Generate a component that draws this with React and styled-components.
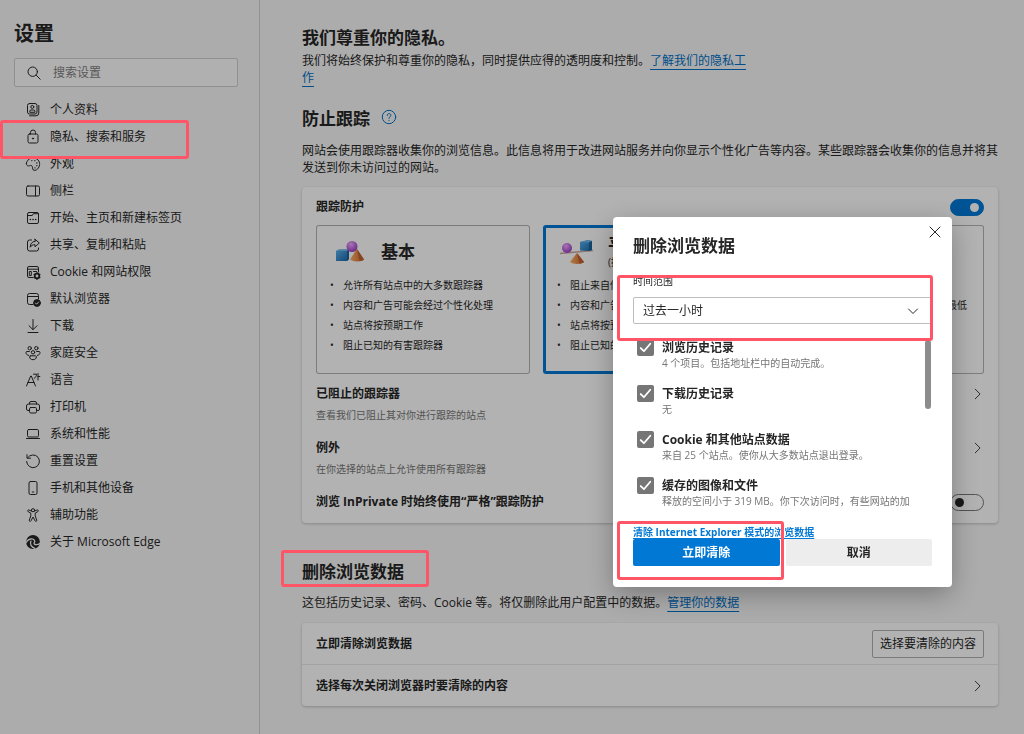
import React from "react";
import styled, { createGlobalStyle } from "styled-components";

const GlobalStyle = createGlobalStyle`
  *, *::before, *::after { box-sizing: border-box; }
  body {
    margin: 0;
    background: #f7f7f7;
    color: #262626;
    font-family: "Open Sans", "Noto Sans CJK SC", sans-serif;
    font-size: 12px;
    line-height: 17px;
  }
  h1, h2, h3, p, ul { margin: 0; padding: 0; }
  button, input, select { font: inherit; color: inherit; margin: 0; }
`;

/* ---------- shared parts ---------- */

const Page = styled.div`
  display: flex;
  min-height: 100vh;
`;

const Highlight = styled.div`
  position: absolute;
  z-index: 2;
  top: ${(p) => p.$top}px;
  left: ${(p) => p.$left}px;
  width: ${(p) => p.$width}px;
  height: ${(p) => p.$height}px;
  border: 3px solid #ff5566;
  border-radius: 3px;
  pointer-events: none;
`;

const Link = styled.a`
  color: #0070c6;
  text-decoration: underline;
  text-decoration-thickness: 1px;
  text-underline-offset: 4px;
`;

const Stroke = styled.svg.attrs({ viewBox: "0 0 16 16", "aria-hidden": true })`
  flex: none;
  width: ${(p) => p.$size || 16}px;
  height: ${(p) => p.$size || 16}px;
  fill: none;
  stroke: currentColor;
  stroke-width: 1;
  stroke-linecap: round;
  stroke-linejoin: round;
`;

/* ---------- sidebar ---------- */

const Sidebar = styled.aside`
  flex: none;
  width: 260px;
  padding-top: 20px;
  border-right: 1px solid #d2d2d2;
`;

const SidebarTitle = styled.h1`
  padding-left: 14px;
  font-size: 20px;
  line-height: 28px;
`;

const SearchBox = styled.label`
  display: flex;
  align-items: center;
  gap: 11px;
  height: 29px;
  margin: 10px 21px 9px 14px;
  padding: 0 11px;
  background: #fcfcfc;
  border: 1px solid #cfcfcf;
  border-radius: 2px;
`;

const SearchInput = styled.input`
  flex: 1;
  min-width: 0;
  padding: 0;
  border: 0;
  outline: 0;
  background: none;
  &::placeholder { color: #808080; opacity: 1; }
`;

const NavItem = styled.div`
  position: relative;
`;

const NavLink = styled.a`
  display: flex;
  align-items: center;
  gap: 9px;
  height: 27px;
  padding-left: 25px;
  color: inherit;
  text-decoration: none;
`;

const icons = {
  profile: (
    <Stroke>
      <rect x="2.5" y="1.500" width="9.5" height="10.5" rx="2" />
      <circle cx="7.3" cy="4.9" r="1.5" />
      <path d="M4.8 9.9V9.1c0-.7.5-1.1 1.1-1.1h2.9c.6 0 1.1.4 1.1 1.1v.8zM13.8 3.5V11a2.8 2.8 0 0 1-2.8 2.8H4.6" />
    </Stroke>
  ),
  lock: (
    <Stroke>
      <rect x="3" y="5" width="10" height="9" rx="1.5" />
      <path d="M5.5 5V3.500a2.5 2.5 0 0 1 5 0V5" />
      <circle cx="8" cy="9.5" r=".6" fill="currentColor" />
    </Stroke>
  ),
  appearance: (
    <Stroke>
      <path d="M1.400 7.200C2 4 5 1.700 8.300 1.900c4 .2 6.600 3.200 6.300 6.700-.3 3.500-3.100 6.100-5.500 5.700-1.800-.3-1.300-2.100-1.800-3.600-.5-1.400-1.500-1.500-2.600-1-1.300.6-3.700.2-3.300-2.500z" />
      <path d="M6.800 4.600h.1M9.800 4.700h.1M11.800 7h.1M11.800 9.700h.1M10 11.800h.1" strokeWidth="1.3" />
    </Stroke>
  ),
  panel: (
    <Stroke>
      <rect x="1.5" y="3" width="13" height="10" rx="1.5" />
      <path d="M10.5 3v10" />
    </Stroke>
  ),
  start: (
    <Stroke>
      <rect x="2.5" y="2.5" width="11" height="11" rx="1.5" />
      <path d="M2.5 5.500h4.800l1-1.800h5.200" />
      <path d="M5.3 9.500h.1M8 9.500h.1M10.700 9.500h.1" strokeWidth="1.6" />
    </Stroke>
  ),
  share: (
    <Stroke>
      <path d="M6.500 3h-2a2 2 0 0 0-2 2v7a2 2 0 0 0 2 2h7a2 2 0 0 0 2-2v-1" />
      <path d="M10 2.200 14.300 6 10 9.800V7.700C7.700 7.600 6.300 8.500 5.200 10.200 5.300 6.800 7 4.500 10 4.300z" />
    </Stroke>
  ),
  cookie: (
    <Stroke>
      <path d="M8 13.500H4a1.500 1.500 0 0 1-1.500-1.500V4A1.500 1.500 0 0 1 4 2.500h8A1.500 1.500 0 0 1 13.500 4v4M2.500 5.200h11M4.700 7.500h1.600v4H4.700zM8.500 7.500h3" />
      <circle cx="12" cy="12" r="2.3" strokeWidth="1.8" />
      <path d="M12 8.800v.5M12 14.700v.5M9.200 10.400l.5.300M14.300 13.300l.5.300M9.200 13.600l.5-.3M14.300 10.700l.5-.3" strokeWidth="1.4" />
    </Stroke>
  ),
  browser: (
    <Stroke>
      <path d="M8 13.500H4.500a2 2 0 0 1-2-2v-7a2 2 0 0 1 2-2h7a2 2 0 0 1 2 2V8M2.500 5.500h11" />
      <circle cx="12" cy="12" r="3.4" fill="currentColor" />
      <path d="m10.500 12.100 1.100 1.100 2-2.200" stroke="#f7f7f7" />
    </Stroke>
  ),
  download: (
    <Stroke>
      <path d="M8 1.500v10M4 7.700l4 4 4-4M3 14.500h10" />
    </Stroke>
  ),
  family: (
    <Stroke>
      <circle cx="4.7" cy="3.2" r="1.7" />
      <circle cx="11.3" cy="3.2" r="1.7" />
      <circle cx="8" cy="7.3" r="1.7" />
      <path d="M4.300 6.500H2c-.6 0-1 .4-1 1 0 1.600 1 2.700 2.600 2.900M11.700 6.500H14c.6 0 1 .4 1 1 0 1.600-1 2.700-2.600 2.900M5.600 10.800h4.800c.6 0 1 .4 1 1 0 1.800-1.400 2.900-3.400 2.900s-3.400-1.100-3.400-2.900c0-.6.4-1 1-1z" />
    </Stroke>
  ),
  language: (
    <Stroke>
      <path d="M1.500 14 5.700 4h.6l4.200 10M3 10.500h6M8.500 2.200h3c0 2-.8 3.200-2.200 4.100M13 1.500V8M13 4.500h1.800" />
    </Stroke>
  ),
  printer: (
    <Stroke>
      <path d="M4.500 11.500H3A1.500 1.500 0 0 1 1.500 10V7a2 2 0 0 1 2-2h9a2 2 0 0 1 2 2v3a1.500 1.500 0 0 1-1.500 1.500h-1.500M4.500 5V4A1.500 1.500 0 0 1 6 2.500h4A1.500 1.500 0 0 1 11.500 4v1" />
      <rect x="4.5" y="8.5" width="7" height="5.5" rx="1.3" />
    </Stroke>
  ),
  laptop: (
    <Stroke>
      <rect x="2.5" y="3.5" width="11" height="7.5" rx="1.3" />
      <path d="M1.500 12.500h13" />
    </Stroke>
  ),
  reset: (
    <Stroke>
      <path d="M2.700 4.700A6.400 6.400 0 1 1 1.600 8.500M2 1.700v3.500h3.600" />
    </Stroke>
  ),
  phone: (
    <Stroke>
      <rect x="4" y="1.5" width="8" height="13" rx="1.5" />
      <path d="M7.200 12h1.600" />
    </Stroke>
  ),
  accessibility: (
    <Stroke>
      <circle cx="8" cy="3.2" r="1.6" />
      <path d="M6.500 4.100 4 3c-1.200-.4-2 1-.8 1.700l2.600 1.400v2.700l-1.500 4.400c-.3 1.200 1.200 1.700 1.700.6L8 10l2 3.800c.5 1.100 2 .6 1.700-.6l-1.500-4.400V6.100l2.600-1.400c1.200-.7.4-2.100-.8-1.700L9.500 4.100" />
    </Stroke>
  ),
  edge: (
    <Stroke>
      <circle cx="8" cy="8" r="6.9" fill="currentColor" stroke="none" />
      <path d="M1.300 8.300C3.200 4.600 7.900 3.900 9.300 6.200c.8 1.100.5 2-.1 2.600-.5.700.2 1.800 1.900 1.900 1.400.1 2.700-.4 3.700-1.300" stroke="#f7f7f7" strokeWidth="1.3" />
      <path d="M5.900 7.200c-1.300 2.800.4 5.800 3.900 7.200" stroke="#f7f7f7" strokeWidth="1.3" />
    </Stroke>
  ),
};

const navEntries = [
  ["profile", "个人资料"],
  ["lock", "隐私、搜索和服务"],
  ["appearance", "外观"],
  ["panel", "侧栏"],
  ["start", "开始、主页和新建标签页"],
  ["share", "共享、复制和粘贴"],
  ["cookie", "Cookie 和网站权限"],
  ["browser", "默认浏览器"],
  ["download", "下载"],
  ["family", "家庭安全"],
  ["language", "语言"],
  ["printer", "打印机"],
  ["laptop", "系统和性能"],
  ["reset", "重置设置"],
  ["phone", "手机和其他设备"],
  ["accessibility", "辅助功能"],
  ["edge", "关于 Microsoft Edge"],
];

/* ---------- main column ---------- */

const Main = styled.main`
  flex: 1;
  min-width: 0;
  padding: 26px 26px 28px 42px;
`;

const Section = styled.section`
  margin-top: ${(p) => p.$gap || 0}px;
`;

const Heading = styled.h2`
  position: relative;
  display: flex;
  gap: 11px;
  font-size: 17px;
  line-height: 24px;
`;

const Text = styled.p`
  margin-top: ${(p) => p.$gap}px;
  max-width: ${(p) => (p.$narrow ? "452px" : "none")};
`;

const HelpButton = styled.button`
  display: flex;
  align-items: center;
  height: 20px;
  padding: 0;
  border: 0;
  background: none;
  color: #0070c6;
`;

const Card = styled.div`
  margin-top: ${(p) => p.$gap}px;
  background: #fff;
  border-radius: 4px;
  box-shadow: 0 1px 3px rgba(0, 0, 0, 0.22);
`;

const CardHead = styled.div`
  display: flex;
  align-items: center;
  justify-content: space-between;
  padding: 10px 14px 8px;
  line-height: 20px;
  font-weight: 700;
`;

const Switch = styled.input.attrs({ type: "checkbox" })`
  appearance: none;
  display: flex;
  align-items: center;
  width: 34px;
  height: 17px;
  padding: 0 4px;
  border: 1px solid #767676;
  border-radius: 9px;
  background: #fff;
  &::before {
    content: "";
    width: 9px;
    height: 9px;
    border-radius: 50%;
    background: #262626;
  }
  &:checked {
    justify-content: flex-end;
    border-color: #0078d4;
    background: #0078d4;
  }
  &:checked::before { background: #fff; }
`;

const Levels = styled.div`
  display: grid;
  grid-template-columns: repeat(3, 1fr);
  gap: 13px;
  padding: 0 14px;
`;

const Level = styled.label`
  position: relative;
  height: 149px;
  border-radius: 3px;
  box-shadow: ${(p) => (p.$selected ? "inset 0 0 0 3px #0078d4" : "inset 0 0 0 1px #b4b4b4")};
`;

const LevelRadio = styled.input.attrs({ type: "radio", name: "level" })`
  appearance: none;
  position: absolute;
  width: 0;
  height: 0;
`;

const LevelHead = styled.div`
  display: flex;
  align-items: center;
  gap: 13px;
  height: 50px;
  padding: 4px 0 0 16px;
`;

const LevelTitle = styled.div`
  font-size: 17px;
  line-height: 20px;
  font-weight: 700;
`;

const LevelNote = styled.div`
  font-size: 10px;
  line-height: 14px;
`;

const LevelList = styled.ul`
  list-style: none;
  padding-left: 14px;
  font-size: 10px;
  line-height: 20px;
`;

const LevelPoint = styled.li`
  display: flex;
  white-space: nowrap;
  &::before {
    content: "•";
    width: 13px;
  }
`;

const SettingRow = styled.div`
  display: flex;
  align-items: flex-start;
  justify-content: space-between;
  padding: 10px 14px ${(p) => (p.$last ? 11 : 5)}px;
`;

const RowTitle = styled.h3`
  font-size: 12px;
  line-height: 20px;
`;

const RowNote = styled.p`
  margin-top: 3px;
  color: #767676;
  font-size: 10px;
  line-height: 16px;
`;

const RowControl = styled.div`
  display: flex;
  align-items: center;
  height: 20px;
`;

const IconButton = styled.button`
  display: flex;
  padding: 0;
  border: 0;
  background: none;
`;

const DataRow = styled.div`
  display: flex;
  align-items: center;
  justify-content: space-between;
  height: 41px;
  padding: 0 14px;
  & + & {
    height: 42px;
    border-top: 1px solid #e8e8e8;
  }
`;

const OutlineButton = styled.button`
  height: 28px;
  padding: 0 7px;
  border: 1px solid #b0b0b0;
  border-radius: 2px;
  background: #fff;
`;

/* ---------- dialog ---------- */

const Backdrop = styled.div`
  position: fixed;
  inset: 0;
  z-index: 1;
  background: rgba(0, 0, 0, 0.3);
`;

const Dialog = styled.div`
  position: fixed;
  z-index: 3;
  top: 217px;
  right: 72px;
  width: 339px;
  padding: 17px 20px 21px;
  background: #fff;
  border-radius: 4px;
  box-shadow: 0 8px 28px rgba(0, 0, 0, 0.3);
`;

const DialogTitle = styled.h2`
  font-size: 17px;
  line-height: 24px;
`;

const CloseButton = styled(IconButton)`
  position: absolute;
  top: 7px;
  right: 9px;
`;

const BodyFrame = styled.div`
  position: relative;
  margin-top: 19px;
`;

const DialogBody = styled.div`
  height: 232px;
  overflow: hidden;
`;

const FieldLabel = styled.label`
  display: block;
  margin-top: -4px;
  font-size: 10px;
  line-height: 16px;
`;

const SelectWrap = styled.div`
  display: grid;
  align-items: center;
  margin: 8px 0 15px;
  & > * { grid-area: 1 / 1; }
  & > svg {
    justify-self: end;
    margin-right: 11px;
    pointer-events: none;
  }
`;

const RangeSelect = styled.select`
  appearance: none;
  width: 100%;
  height: 27px;
  padding: 0 9px;
  border: 1px solid #bdbdbd;
  border-radius: 2px;
  background: #fff;
`;

const Option = styled.label`
  display: flex;
  gap: 8px;
  height: 46px;
  padding-left: 4px;
`;

const CheckMark = styled.span`
  display: grid;
  place-items: center;
  width: 17px;
  height: 17px;
  color: #fff;
  & > * { grid-area: 1 / 1; }
`;

const Check = styled.input.attrs({ type: "checkbox" })`
  appearance: none;
  width: 17px;
  height: 17px;
  border-radius: 2px;
  background: #767676;
`;

const OptionTitle = styled.div`
  line-height: 18px;
  font-weight: 700;
`;

const OptionNote = styled.div`
  color: #767676;
  font-size: 10px;
  line-height: 12px;
  white-space: nowrap;
`;

const ScrollThumb = styled.div`
  position: absolute;
  top: 63px;
  right: 1px;
  width: 6px;
  height: 69px;
  border-radius: 3px;
  background: #8c8c8c;
`;

const IeLink = styled(Link)`
  display: block;
  margin-top: 16px;
  color: #0078d4;
  font-size: 10px;
  line-height: 14px;
  font-weight: 700;
  text-underline-offset: 2px;
`;

const Actions = styled.div`
  position: relative;
  display: grid;
  grid-template-columns: 1fr 1fr;
  gap: 6px;
`;

const ActionButton = styled.button`
  height: 27px;
  padding: 0;
  border: 0;
  border-radius: 2px;
  font-weight: 700;
  color: ${(p) => (p.$primary ? "#fff" : "#262626")};
  background: ${(p) => (p.$primary ? "#0078d4" : "#ededed")};
`;

/* ---------- drawings ---------- */

const Art = styled.svg`
  flex: none;
  width: 36px;
  height: 28px;
`;

const ArtPaints = () => (
  <defs>
    <linearGradient id="cube" x1="0" y1="0" x2="1" y2="1">
      <stop offset="0" stopColor="#5fb4ee" />
      <stop offset="1" stopColor="#1565a8" />
    </linearGradient>
    <radialGradient id="ball" cx=".4" cy=".3" r=".7">
      <stop offset="0" stopColor="#f0a8ff" />
      <stop offset="1" stopColor="#9a3fc4" />
    </radialGradient>
    <linearGradient id="cone" x1="0" y1="0" x2="1" y2="0">
      <stop offset="0" stopColor="#ffb469" />
      <stop offset="1" stopColor="#d0602a" />
    </linearGradient>
  </defs>
);

const StackArt = () => (
  <Art viewBox="0 0 36 28" aria-hidden="true">
    <ArtPaints />
    <path d="M4 13l3-1.500h10V21l-2 2H4z" fill="url(#cube)" />
    <path d="M4 13l3-1.500h10L15 13z" fill="#6bb6e8" />
    <path d="M15 13l2-1.500V21l-2 2z" fill="#1d6299" />
    <circle cx="20" cy="8.500" r="5.500" fill="url(#ball)" />
    <path d="M25 11l7 10.500c-3 2.500-11 2.500-14 0z" fill="url(#cone)" />
    <path d="M25 11l7 10.500c-1 1-2.500 1.400-4.500 1.700z" fill="#c2622f" />
  </Art>
);

const BalanceArt = () => (
  <Art viewBox="0 0 36 28" aria-hidden="true">
    <path d="M1 15.500 34 12.500" stroke="#c9a9a0" strokeWidth="1.500" />
    <circle cx="8" cy="10" r="5" fill="url(#ball)" />
    <path d="M21 4l8-2 4 1v9l-4 1-8-.500z" fill="url(#cube)" />
    <path d="M21 4l8-2 4 1-3 1.500z" fill="#6bb6e8" />
    <path d="M30 4.500 33 3v9l-3 1z" fill="#1d6299" />
    <path d="M18 15l7 9c-3 2.500-11 2.500-14 0z" fill="url(#cone)" />
    <path d="M18 15l7 9c-1 1-2.500 1.400-4.500 1.700z" fill="#c2622f" />
  </Art>
);

const StrictArt = () => (
  <Art viewBox="0 0 36 28" aria-hidden="true">
    <path d="M14 4l3-2h10v10l-2 2H14z" fill="url(#cube)" />
    <circle cx="10" cy="19" r="5" fill="url(#ball)" />
    <path d="M25 13l7 10.500c-3 2.500-11 2.500-14 0z" fill="url(#cone)" />
  </Art>
);

const levels = [
  {
    title: "基本",
    art: <StackArt />,
    points: ["允许所有站点中的大多数跟踪器", "内容和广告可能会经过个性化处理", "站点将按预期工作", "阻止已知的有害跟踪器"],
  },
  {
    title: "平衡",
    note: "(推荐)",
    selected: true,
    art: <BalanceArt />,
    points: ["阻止来自你尚未访问的站点的跟踪器", "内容和广告的个性化程度可能会降低", "站点将按预期工作", "阻止已知的有害跟踪器"],
  },
  {
    title: "严格",
    art: <StrictArt />,
    points: ["阻止来自所有站点的大多数跟踪器", "内容和广告的个性化设置可能降到最低", "部分站点可能无法工作", "阻止已知的有害跟踪器"],
  },
];

const clearOptions = [
  ["浏览历史记录", "4 个项目。包括地址栏中的自动完成。"],
  ["下载历史记录", "无"],
  ["Cookie 和其他站点数据", "来自 25 个站点。使你从大多数站点退出登录。"],
  ["缓存的图像和文件", "释放的空间小于 319 MB。你下次访问时，有些网站的加"],
];

const ChevronRight = ({ label }) => (
  <IconButton aria-label={label}>
    <Stroke $size={14}>
      <path d="m6 2.500 5.500 5.500L6 13.500" />
    </Stroke>
  </IconButton>
);

function SettingsNav() {
  return (
    <Sidebar>
      <SidebarTitle>设置</SidebarTitle>
      <SearchBox>
        <Stroke>
          <circle cx="6.700" cy="6.700" r="4.700" />
          <path d="m10.200 10.200 4 4" />
        </Stroke>
        <SearchInput type="text" placeholder="搜索设置" aria-label="搜索设置" />
      </SearchBox>
      <nav>
        {navEntries.map(([icon, label]) => (
          <NavItem key={icon}>
            <NavLink href="#">
              {icons[icon]}
              {label}
            </NavLink>
            {icon === "lock" && <Highlight $top={-3} $left={0} $width={189} $height={39} />}
          </NavItem>
        ))}
      </nav>
    </Sidebar>
  );
}

function ClearDialog() {
  return (
    <Dialog role="dialog" aria-labelledby="clear-title">
      <DialogTitle id="clear-title">删除浏览数据</DialogTitle>
      <CloseButton aria-label="关闭">
        <Stroke>
          <path d="m3 3 10 10M13 3 3 13" />
        </Stroke>
      </CloseButton>
      <BodyFrame>
        <DialogBody>
          <FieldLabel htmlFor="range">时间范围</FieldLabel>
          <SelectWrap>
            <RangeSelect id="range">
              <option>过去一小时</option>
            </RangeSelect>
            <Stroke>
              <path d="m3.500 6 4.500 4.500L12.500 6" />
            </Stroke>
          </SelectWrap>
          {clearOptions.map(([title, note]) => (
            <Option key={title}>
              <CheckMark>
                <Check defaultChecked />
                <Stroke $size={17}>
                  <path d="m3.500 8.500 3 3 6-7" strokeWidth="1.700" />
                </Stroke>
              </CheckMark>
              <div>
                <OptionTitle>{title}</OptionTitle>
                <OptionNote>{note}</OptionNote>
              </div>
            </Option>
          ))}
        </DialogBody>
        <ScrollThumb />
        <Highlight $top={-2} $left={-16} $width={316} $height={66} />
      </BodyFrame>
      <IeLink href="#">清除 Internet Explorer 模式的浏览数据</IeLink>
      <Actions>
        <ActionButton $primary>立即清除</ActionButton>
        <ActionButton>取消</ActionButton>
        <Highlight $top={-18} $left={-16} $width={167} $height={59} />
      </Actions>
    </Dialog>
  );
}

export default function App() {
  return (
    <>
      <GlobalStyle />
      <Page lang="zh-CN">
        <SettingsNav />
        <Main>
          <Section>
            <Heading>我们尊重你的隐私。</Heading>
            <Text $gap={2} $narrow>
              我们将始终保护和尊重你的隐私，同时提供应得的透明度和控制。<Link href="#">了解我们的隐私工作</Link>
            </Text>
          </Section>
          <Section $gap={21}>
            <Heading>
              防止跟踪
              <HelpButton aria-label="帮助">
                <Stroke>
                  <circle cx="8" cy="8" r="6.700" />
                  <path d="M6.200 6.500c0-2.600 3.700-2.400 3.700-.2 0 1.300-1.900 1.500-1.900 3.100M8 11.500v.1" />
                </Stroke>
              </HelpButton>
            </Heading>
            <Text $gap={11}>
              网站会使用跟踪器收集你的浏览信息。此信息将用于改进网站服务并向你显示个性化广告等内容。某些跟踪器会收集你的信息并将其发送到你未访问过的网站。
            </Text>
            <Card $gap={11}>
              <CardHead>
                <label htmlFor="protection">跟踪防护</label>
                <Switch id="protection" defaultChecked />
              </CardHead>
              <Levels>
                {levels.map((level) => (
                  <Level key={level.title} $selected={level.selected}>
                    <LevelRadio defaultChecked={level.selected} />
                    <LevelHead>
                      {level.art}
                      <div>
                        <LevelTitle>{level.title}</LevelTitle>
                        {level.note && <LevelNote>{level.note}</LevelNote>}
                      </div>
                    </LevelHead>
                    <LevelList>
                      {level.points.map((point) => (
                        <LevelPoint key={point}>{point}</LevelPoint>
                      ))}
                    </LevelList>
                  </Level>
                ))}
              </Levels>
              <SettingRow>
                <div>
                  <RowTitle>已阻止的跟踪器</RowTitle>
                  <RowNote>查看我们已阻止其对你进行跟踪的站点</RowNote>
                </div>
                <RowControl>
                  <ChevronRight label="已阻止的跟踪器" />
                </RowControl>
              </SettingRow>
              <SettingRow>
                <div>
                  <RowTitle>例外</RowTitle>
                  <RowNote>在你选择的站点上允许使用所有跟踪器</RowNote>
                </div>
                <RowControl>
                  <ChevronRight label="例外" />
                </RowControl>
              </SettingRow>
              <SettingRow $last>
                <RowTitle as="label" htmlFor="inprivate">
                  <b>浏览 InPrivate 时始终使用“严格”跟踪防护</b>
                </RowTitle>
                <RowControl>
                  <Switch id="inprivate" />
                </RowControl>
              </SettingRow>
            </Card>
          </Section>
          <Section $gap={37}>
            <Heading>
              删除浏览数据
              <Highlight $top={-10} $left={-21} $width={148} $height={37} />
            </Heading>
            <Text $gap={10}>
              这包括历史记录、密码、Cookie 等。将仅删除此用户配置中的数据。<Link href="#">管理你的数据</Link>
            </Text>
            <Card $gap={12}>
              <DataRow>
                <RowTitle>立即清除浏览数据</RowTitle>
                <OutlineButton>选择要清除的内容</OutlineButton>
              </DataRow>
              <DataRow>
                <RowTitle>选择每次关闭浏览器时要清除的内容</RowTitle>
                <ChevronRight label="选择每次关闭浏览器时要清除的内容" />
              </DataRow>
            </Card>
          </Section>
        </Main>
      </Page>
      <Backdrop />
      <ClearDialog />
    </>
  );
}
